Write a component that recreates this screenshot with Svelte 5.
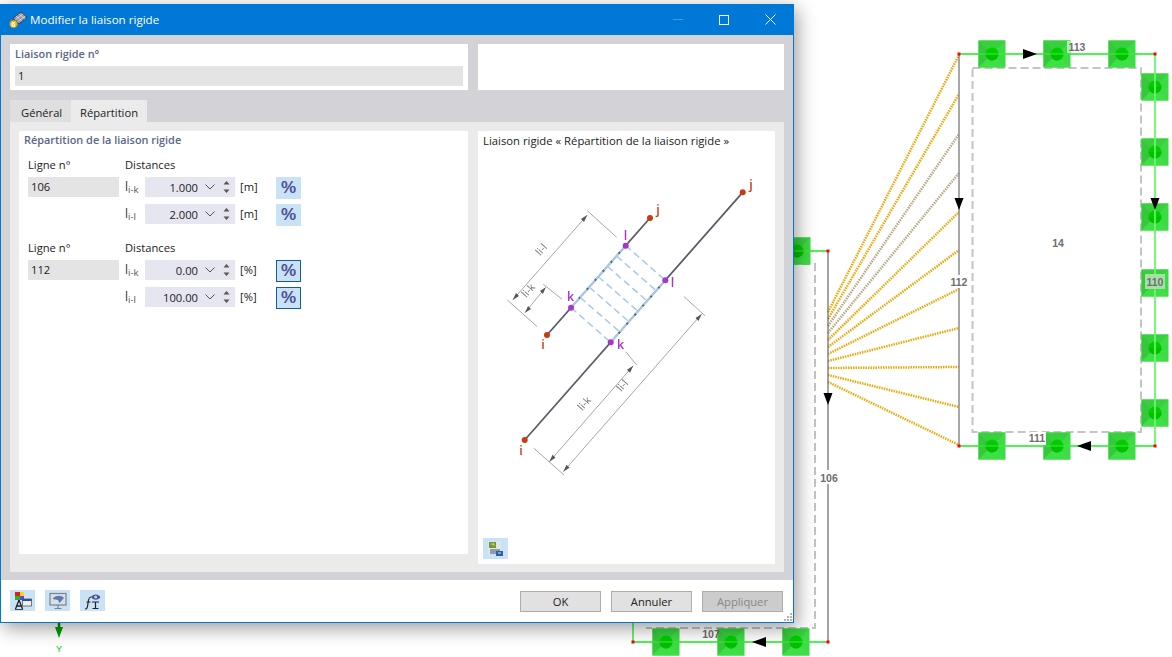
<script>
  const fanRight = [55, 94, 134, 173, 212, 250, 289, 328, 367, 407, 445]
  const links = fanRight.map((y, n) => ({
    x1: 828,
    y1: 312 + n * 7,
    x2: 959,
    y2: y,
    grey: n === 2 || n === 3
  }))

  const supports = [
    [992, 54], [1057, 54], [1122, 54],
    [1155, 87], [1155, 152], [1155, 217], [1155, 283], [1155, 348], [1155, 413],
    [992, 446], [1057, 446], [1122, 446],
    [797, 251],
    [666, 642], [731, 642], [796, 642]
  ]

  const rows = [
    {
      line: '106',
      outlined: false,
      items: [
        { sub: 'i-k', value: '1.000', unit: '[m]' },
        { sub: 'i-l', value: '2.000', unit: '[m]' }
      ]
    },
    {
      line: '112',
      outlined: true,
      items: [
        { sub: 'i-k', value: '0.00', unit: '[%]' },
        { sub: 'i-l', value: '100.00', unit: '[%]' }
      ]
    }
  ]

  const hatch = [0, 1, 2, 3, 4, 5, 6].map((n) => {
    const t = n / 6
    return {
      x1: 571 + (625.7 - 571) * t,
      y1: 307.7 + (245.7 - 307.7) * t,
      x2: 610.7 + (665.3 - 610.7) * t,
      y2: 342.3 + (280.3 - 342.3) * t
    }
  })
</script>

<div class="screen">
  <svg class="model" width="1172" height="657" viewBox="0 0 1172 657">
    <!-- surface outlines -->
    <g fill="none" stroke="#c4c4c4" stroke-width="2" stroke-dasharray="8 4">
      <rect x="972.5" y="68" width="168.5" height="364" />
      <path d="M790 264H815V628H646" />
    </g>

    <!-- rigid links -->
    {#each links as l}
      <line
        x1={l.x1}
        y1={l.y1}
        x2={l.x2}
        y2={l.y2}
        stroke={l.grey ? '#b8aa84' : '#eaa90a'}
        stroke-width="2.500"
        stroke-dasharray="1.500 1"
      />
    {/each}

    <!-- members -->
    <path d="M959 54V446" stroke="#8a8a8a" stroke-width="1.5" fill="none" />
    <path d="M828 251V642" stroke="#666" stroke-width="1.2" fill="none" />
    <path d="M1155 54V446" stroke="#78f878" stroke-width="2" fill="none" />
    <path d="M959 54H1155M959 446H1155M794 251H828M633 642H828M633 620V642" stroke="#3cf03c" stroke-width="1.5" fill="none" />

    {#each supports as [x, y]}
      <g transform="translate({x} {y})">
        <rect x="-13.5" y="-13.5" width="27" height="27" fill="#3cdc44" />
        <path d="M-13.5 -13.5L13.5 -13.5L0 0Z" fill="#38d03d" />
        <path d="M-13.5 -13.5L-13.5 13.5L0 0Z" fill="#35c83a" />
        <path d="M13.5 13.5L-13.5 13.5L0 0Z" fill="#3fe046" />
        <circle r="6.5" fill="#00cc00" />
        <path d="M-6.5 0A6.5 6.5 0 0 0 6.5 0Z" fill="#00c000" />
      </g>
    {/each}
    <path d="M959 54H1155M959 446H1155M794 251H828M633 642H828" stroke="#3cf03c" stroke-width="1.2" fill="none" />
    <path d="M1155 70V430" stroke="#78f878" stroke-width="1.5" fill="none" />

    <g fill="#f00">
      <rect x="957.5" y="52.5" width="3" height="3" />
      <rect x="1153.5" y="52.5" width="3" height="3" />
      <rect x="957.5" y="444.5" width="3" height="3" />
      <rect x="1153.5" y="444.5" width="3" height="3" />
      <rect x="826.5" y="249.5" width="3" height="3" />
      <rect x="631.5" y="640.5" width="3" height="3" />
      <rect x="826.5" y="640.5" width="3" height="3" />
    </g>

    <!-- direction arrows -->
    <g fill="#000">
      <path d="M1023 49L1037 54L1023 59Z" />
      <path d="M954.500 198H963.500L959 210Z" />
      <path d="M1150.500 198H1159.500L1155 210Z" />
      <path d="M823.500 393H832.500L828 405Z" />
      <path d="M1091 441L1077 446L1091 451Z" />
      <path d="M766 637L752 642L766 647Z" />
    </g>

    <!-- numbers -->
    <g class="num">
      <rect x="1067" y="41" width="4" height="12" fill="#b6efb6" />
      <text x="1077" y="51">113</text>
      <text x="1058" y="247">14</text>
      <rect x="950" y="275" width="14" height="13" fill="#fff" />
      <text x="959" y="286">112</text>
      <rect x="1145" y="274" width="20" height="15" fill="#a6e0a6" />
      <text x="1155" y="286">110</text>
      <rect x="1030" y="432" width="16" height="13" fill="#fff" />
      <text x="1037" y="442">111</text>
      <rect x="818" y="470" width="22" height="14" fill="#fff" />
      <text x="829" y="482">106</text>
      <text x="711" y="638">107</text>
    </g>

    <!-- global axis -->
    <path d="M59 622V630" stroke="#008a00" stroke-width="2.500" />
    <path d="M55 627H63L59 638Z" fill="#00a000" />
    <text x="59" y="652" class="axis">Y</text>
  </svg>

  <div class="dialog">
    <header class="titlebar">
      <svg class="app-icon" width="18" height="18" viewBox="0 0 18 18">
        <path d="M4 7L12 1L18 6L10 13Z" fill="#8b93a6" stroke="#3c4252" stroke-width="1" />
        <path d="M7 5L13 10M10 3L16 8M6 9L14 3M8.500 11L16 5" stroke="#dde2ea" stroke-width="0.800" />
        <circle cx="4.500" cy="13" r="4" fill="#e8b83a" stroke="#8a6a10" stroke-width="0.600" />
        <text x="4.500" y="16" class="app-glyph">6</text>
      </svg>
      <span class="title">Modifier la liaison rigide</span>
      <div class="controls">
        <span class="ctl"><i class="min"></i></span>
        <span class="ctl"><i class="max"></i></span>
        <span class="ctl">
          <svg width="11" height="11" viewBox="0 0 11 11"><path d="M.5 .5L10.500 10.500M10.500 .5L.5 10.500" stroke="#fff" stroke-width="1" /></svg>
        </span>
      </div>
    </header>

    <div class="body">
      <div class="top">
        <section class="id-box">
          <div class="heading">Liaison rigide n°</div>
          <div class="field wide">1</div>
        </section>
        <section class="blank"></section>
      </div>

      <nav class="tabs">
        <span class="tab">Général</span>
        <span class="tab active">Répartition</span>
      </nav>

      <div class="page">
        <section class="form">
          <div class="heading">Répartition de la liaison rigide</div>
          {#each rows as group}
            <div class="group">
              <div class="col-line">
                <div class="cap">Ligne n°</div>
                <div class="field line-no">{group.line}</div>
              </div>
              <div class="col-dist">
                <div class="cap">Distances</div>
                {#each group.items as item}
                  <div class="dist">
                    <span class="sym">l<sub>{item.sub}</sub></span>
                    <div class="spin">
                      <span class="val">{item.value}</span>
                      <svg class="chev" width="10" height="6" viewBox="0 0 10 6"><path d="M.5 .5L5 5L9.500 .5" fill="none" stroke="#555" stroke-width="1" /></svg>
                      <svg class="arrows" width="7" height="14" viewBox="0 0 7 14">
                        <path d="M3.500 1L6.500 4.500H.5Z" fill="#555" />
                        <path d="M3.500 13L6.500 9.500H.5Z" fill="#555" />
                      </svg>
                    </div>
                    <span class="unit">{item.unit}</span>
                    <button class="pct" class:outlined={group.outlined}>%</button>
                  </div>
                {/each}
              </div>
            </div>
          {/each}
        </section>

        <section class="preview">
          <div class="preview-title">Liaison rigide « Répartition de la liaison rigide »</div>
          <svg class="scheme" width="297" height="433" viewBox="478 131 297 433">
            <!-- dimension lines -->
            <g stroke="#9c9ca2" stroke-width="0.900" fill="none">
              <path d="M512.700 300L587.300 215M587.300 210.700L616.700 237.300M507.300 300L537.300 326.700" />
              <path d="M525 312.700L545.700 287.300M543.300 284.300L562 299.300" />
              <path d="M563.300 471.700L701.700 314M684 296.700L705 315.700M534 448.300L564 475" />
              <path d="M549.300 461.700L633.300 365.700M625.700 351.700L636.700 365" />
            </g>
            <g fill="#55555c">
              <path d="M587.300 215L581 219L584 222Z" />
              <path d="M512.700 300L519 296L516 293Z" />
              <path d="M545.700 287.300L540 291L543 294Z" />
              <path d="M525 312.700L531 309L528 306Z" />
              <path d="M701.700 314L695.500 318L698.500 321Z" />
              <path d="M563.300 471.700L569.500 467.700L566.500 464.700Z" />
              <path d="M633.300 365.700L627 369.700L630 372.700Z" />
              <path d="M549.300 461.700L555.500 457.700L552.500 454.700Z" />
            </g>

            <!-- lines -->
            <path d="M524.700 440L742.700 192.300M547 335L650 218" stroke="#5d5c68" stroke-width="1.800" fill="none" />
            <path d="M571 307.700L625.700 245.700M610.700 342.300L665.300 280.300" stroke="#a9cdef" stroke-width="2" fill="none" />
            <path d="M571 307.700L625.700 245.700M610.700 342.300L665.300 280.300" stroke="#5d5c68" stroke-width="1.800" stroke-dasharray="2 10" fill="none" />
            {#each hatch as h}
              <line x1={h.x1} y1={h.y1} x2={h.x2} y2={h.y2} stroke="#a4caf0" stroke-width="1.500" stroke-dasharray="7 4" />
            {/each}

            <g fill="#cc3a10">
              <circle cx="524.700" cy="440" r="3" />
              <circle cx="742.700" cy="192.300" r="3" />
              <circle cx="547" cy="335" r="3" />
              <circle cx="650" cy="218" r="3" />
            </g>
            <g fill="#aa33cc">
              <circle cx="571" cy="307.700" r="3" />
              <circle cx="625.700" cy="245.700" r="3" />
              <circle cx="610.700" cy="342.300" r="3" />
              <circle cx="665.300" cy="280.300" r="3" />
            </g>

            <g class="pt red">
              <text x="521" y="455">i</text>
              <text x="543" y="349">i</text>
              <text x="751" y="189">j</text>
              <text x="658" y="214">j</text>
            </g>
            <g class="pt violet">
              <text x="570.500" y="301">k</text>
              <text x="625.500" y="240">l</text>
              <text x="672.500" y="287">l</text>
              <text x="620.500" y="349">k</text>
            </g>
            <g class="dim">
              <text transform="translate(544 252) rotate(-48)">li-l</text>
              <text transform="translate(531 293) rotate(-48)">li-k</text>
              <text transform="translate(587 406) rotate(-48)">li-k</text>
              <text transform="translate(625 388) rotate(-48)">li-l</text>
            </g>
          </svg>
          <button class="icon-btn export" aria-label="Exporter">
            <svg width="18" height="18" viewBox="0 0 18 18">
              <rect x="1" y="1" width="13" height="13" fill="#dfe6ea" />
              <rect x="2" y="2" width="7" height="6" fill="#6f9a3c" />
              <path d="M3 4L7 3L8 6Z" fill="#d9c23a" />
              <rect x="3" y="9" width="10" height="5" fill="#8d9bb0" />
              <path d="M9 11H16V16H9Z" fill="#2f5f9c" />
              <path d="M11 13H14" stroke="#cfe0f2" />
            </svg>
          </button>
        </section>
      </div>
    </div>

    <footer class="footer">
      <div class="tools">
        <button class="icon-btn" aria-label="Modèle">
          <svg width="18" height="18" viewBox="0 0 18 18">
            <rect x="1" y="0" width="5" height="4" fill="#e02020" />
            <rect x="6" y="0" width="4" height="4" fill="#f0d820" />
            <rect x="1" y="4" width="5" height="4" fill="#30b030" />
            <rect x="6" y="4" width="4" height="4" fill="#7040d0" />
            <path d="M5 8L1.500 17M5 8L8.500 17M3 14H7" stroke="#222" stroke-width="1.300" fill="none" />
            <rect x="8.500" y="7" width="9" height="7" fill="#f0f0f0" stroke="#555" stroke-width="0.800" />
            <rect x="8.500" y="7" width="9" height="2" fill="#2c4f9c" />
            <path d="M1 17.500H9" stroke="#222" stroke-width="0.800" />
          </svg>
        </button>
        <button class="icon-btn" aria-label="Affichage">
          <svg width="18" height="18" viewBox="0 0 18 18">
            <rect x="1" y="1.500" width="16" height="11.500" fill="#d9dfe6" stroke="#7a8290" stroke-width="1.200" />
            <path d="M3.500 7C6 3 12 2.500 15 6L10.500 11L9 8Z" fill="#5a7bb0" />
            <path d="M9 13V16M5.500 16.500H12.500" stroke="#7a8290" stroke-width="1.200" />
          </svg>
        </button>
        <button class="icon-btn" aria-label="Formule">
          <svg width="18" height="18" viewBox="0 0 18 18">
            <path d="M7 5C9 1.500 14.500 1.500 16.500 5C14.500 8.500 9 8.500 7 5Z" fill="#4a4f9c" />
            <circle cx="11.700" cy="5" r="1.500" fill="#c8d0f0" />
            <path d="M1 17C3.500 17 3.500 15 4 11C4.500 7 5 5 7 5M2.500 10H6.500" stroke="#222" stroke-width="1.200" fill="none" />
            <path d="M8 10H15M11.500 10V16M8.500 16.500H14.500" stroke="#222" stroke-width="1.200" fill="none" />
          </svg>
        </button>
      </div>
      <div class="actions">
        <button class="btn">OK</button>
        <button class="btn">Annuler</button>
        <button class="btn off" disabled>Appliquer</button>
      </div>
      <svg class="grip" width="10" height="10" viewBox="0 0 10 10">
        <g fill="#b4b4b4">
          <rect x="7" y="1" width="2" height="2" />
          <rect x="4" y="4" width="2" height="2" />
          <rect x="7" y="4" width="2" height="2" />
          <rect x="1" y="7" width="2" height="2" />
          <rect x="4" y="7" width="2" height="2" />
          <rect x="7" y="7" width="2" height="2" />
        </g>
      </svg>
    </footer>
  </div>
</div>

<style>
  :global(body) {
    margin: 0;
    background: #fff;
    overflow: hidden;
  }

  .screen {
    position: relative;
    width: 1172px;
    height: 657px;
    overflow: hidden;
    background: #fff;
    font-family: 'Open Sans', 'Noto Sans', sans-serif;
    font-size: 11.200px;
    color: #222;
  }

  .model {
    position: absolute;
    left: 0;
    top: 0;
  }

  .num text {
    font-family: 'Liberation Sans', sans-serif;
    font-size: 10.500px;
    font-weight: 700;
    fill: #6e6e6e;
    text-anchor: middle;
  }

  .axis {
    font-family: 'Liberation Sans', sans-serif;
    font-size: 9px;
    fill: #00d000;
    text-anchor: middle;
  }

  .dialog {
    position: absolute;
    left: 0;
    top: 4px;
    width: 794px;
    height: 619px;
    box-sizing: border-box;
    display: flex;
    flex-direction: column;
    border: 1px solid #0078d7;
    border-top: 0;
    background: #fff;
    box-shadow: 3px 5px 18px rgba(0, 0, 0, 0.4);
  }

  .titlebar {
    height: 31px;
    flex: none;
    margin: 0 -1px;
    padding-left: 9px;
    display: flex;
    align-items: center;
    gap: 3px;
    background: #0078d7;
    color: #fff;
    font-size: 11.600px;
  }

  .app-glyph {
    font-family: 'Liberation Sans', sans-serif;
    font-size: 7px;
    font-weight: 700;
    fill: #fff;
    text-anchor: middle;
  }

  .title {
    flex: 1;
  }

  .controls {
    display: flex;
    margin-right: 1px;
  }

  .ctl {
    width: 46px;
    height: 31px;
    display: flex;
    align-items: center;
    justify-content: center;
  }

  .min {
    width: 10px;
    height: 1px;
    background: #3f9be6;
  }

  .max {
    width: 8px;
    height: 8px;
    border: 1px solid #fff;
  }

  .body {
    flex: 1;
    min-height: 0;
    box-sizing: border-box;
    display: flex;
    flex-direction: column;
    padding: 9px 9px 8px;
    background: #d3d2d6;
  }

  .top {
    display: grid;
    grid-template-columns: 458px 306px;
    gap: 10px;
    height: 46px;
    flex: none;
  }

  .id-box,
  .blank {
    background: #fff;
  }

  .id-box {
    padding: 2px 5px 0;
  }

  .heading {
    font-size: 10.900px;
    font-weight: 600;
    color: #5b6687;
    line-height: 16px;
  }

  .field {
    background: #e4e4e4;
    height: 20px;
    line-height: 20px;
    box-sizing: border-box;
    padding-left: 3px;
    color: #222;
  }

  .wide {
    margin-top: 4px;
  }

  .tabs {
    display: flex;
    margin-top: 10px;
    height: 22px;
    flex: none;
  }

  .tab {
    box-sizing: border-box;
    width: 61px;
    padding-left: 11px;
    line-height: 25px;
    background: #dfdfe0;
  }

  .tab.active {
    width: 76px;
    padding-left: 9px;
    background: #ebebeb;
  }

  .page {
    flex: 1;
    min-height: 0;
    display: flex;
    gap: 10px;
    padding: 9px;
    background: #ebebeb;
    align-items: flex-start;
  }

  .form {
    width: 449px;
    height: 423px;
    box-sizing: border-box;
    padding: 1px 9px 0 5px;
    background: #fff;
  }

  .group {
    display: flex;
    gap: 6px;
    margin: 10px 0 17px 4px;
  }

  .col-line {
    width: 91px;
  }

  .cap {
    height: 19px;
    line-height: 14px;
  }

  .col-dist {
    display: flex;
    flex-direction: column;
  }

  .dist {
    display: flex;
    align-items: flex-start;
    height: 20px;
    margin-bottom: 7px;
  }

  .dist:last-child {
    margin-bottom: 0;
  }

  .sym {
    width: 20px;
    font-size: 12px;
    line-height: 20px;
    color: #3a3034;
  }

  .sym sub {
    font-size: 9.500px;
    color: #4d5560;
    vertical-align: -2px;
    line-height: 0;
  }

  .spin {
    width: 90px;
    height: 20px;
    background: #e6e6f0;
    display: flex;
    align-items: center;
    box-sizing: border-box;
  }

  .val {
    width: 53px;
    text-align: right;
  }

  .chev {
    margin-left: 7px;
  }

  .arrows {
    margin-left: 8px;
  }

  .unit {
    width: 36px;
    margin-left: 5px;
    line-height: 20px;
  }

  .pct {
    width: 25px;
    height: 22px;
    padding: 0;
    box-sizing: border-box;
    border: 0;
    background: #cae2f6;
    color: #4c4f95;
    font-family: 'Liberation Sans', sans-serif;
    font-size: 17px;
    font-weight: 700;
    line-height: 22px;
  }

  .pct.outlined {
    border: 1px solid #135c9e;
    line-height: 20px;
  }

  .preview {
    width: 297px;
    height: 433px;
    position: relative;
    background: #fff;
  }

  .preview-title {
    position: relative;
    padding: 2px 0 0 5px;
    font-size: 11.300px;
    line-height: 16px;
    color: #222;
  }

  .scheme {
    position: absolute;
    left: 0;
    top: 0;
    filter: blur(0.3px);
  }

  .pt text {
    font-family: 'Open Sans', sans-serif;
    font-size: 12.500px;
    font-weight: 600;
    text-anchor: middle;
  }

  .pt.red text {
    fill: #cc3a10;
  }

  .pt.violet text {
    fill: #aa33cc;
  }

  .dim text {
    font-family: 'Open Sans', sans-serif;
    font-size: 10.500px;
    fill: #6e6e74;
    text-anchor: middle;
  }

  .icon-btn {
    width: 25px;
    height: 21px;
    padding: 0;
    border: 0;
    background: #cae2f6;
    display: flex;
    align-items: center;
    justify-content: center;
  }

  .export {
    position: absolute;
    left: 5px;
    top: 407px;
  }

  .footer {
    height: 42px;
    flex: none;
    box-sizing: border-box;
    position: relative;
    display: flex;
    align-items: flex-start;
    justify-content: space-between;
    padding: 10px 10px 0 9px;
  }

  .tools {
    display: flex;
    gap: 10px;
  }

  .actions {
    display: flex;
    gap: 10px;
    margin-top: 1px;
  }

  .btn {
    width: 81px;
    height: 21px;
    padding: 0;
    box-sizing: border-box;
    border: 1px solid #adadad;
    background: #e1e1e1;
    color: #222;
    font-family: inherit;
    font-size: 11.200px;
  }

  .btn.off {
    background: #cccccc;
    color: #888;
  }

  .grip {
    position: absolute;
    right: 0;
    bottom: 0;
  }
</style>
